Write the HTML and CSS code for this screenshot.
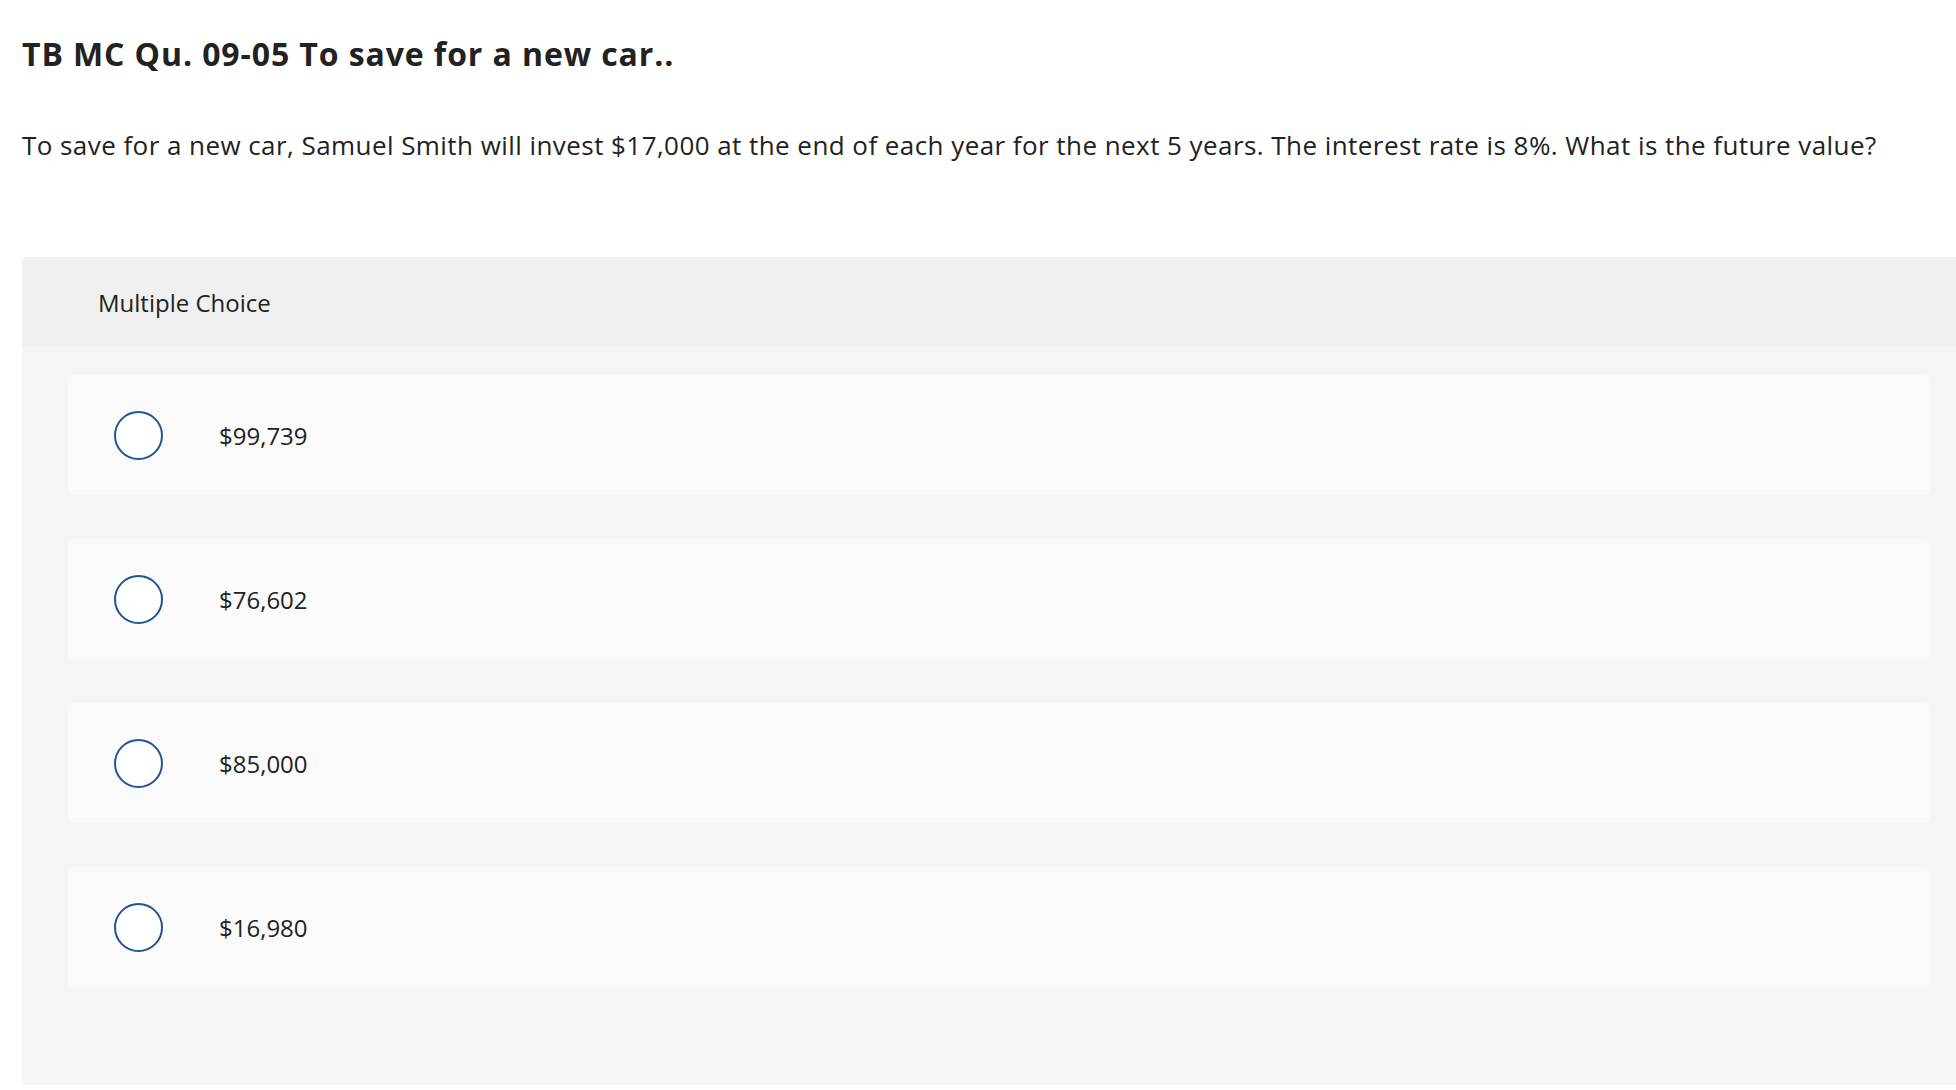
FILE: index.html
```html
<!DOCTYPE html>
<html lang="en">
<head>
<meta charset="utf-8">
<title>TB MC Qu. 09-05</title>
<link rel="stylesheet" href="styles.css">
</head>
<body>
<main class="page">
  <h1 class="title">TB MC Qu. 09-05 To save for a new car..</h1>
  <p class="question">To save for a new car, Samuel Smith will invest $17,000 at the end of each year for the next 5 years. The interest rate is 8%. What is the future value?</p>
  <section class="panel">
    <div class="panel-head">Multiple Choice</div>
    <div class="panel-body">
      <label class="option"><span class="radio"></span><span class="answer">$99,739</span></label>
      <label class="option"><span class="radio"></span><span class="answer">$76,602</span></label>
      <label class="option"><span class="radio"></span><span class="answer">$85,000</span></label>
      <label class="option"><span class="radio"></span><span class="answer">$16,980</span></label>
    </div>
  </section>
</main>
</body>
</html>
```

FILE: styles.css
```css
html, body {
  margin: 0;
  padding: 0;
  background: #ffffff;
}

body {
  font-family: "Open Sans", "Liberation Sans", sans-serif;
  color: #222222;
  overflow: hidden;
}

.page {
  padding: 34px 0 0 22px;
}

.title {
  margin: 0;
  font-size: 32px;
  line-height: 40px;
  font-weight: 700;
  letter-spacing: 0.9px;
  color: #222222;
}

.question {
  margin: 54px 0 0 0;
  font-size: 26px;
  line-height: 34px;
  letter-spacing: 0.44px;
  color: #222222;
}

.panel {
  margin-top: 95px;
  border-radius: 5px 0 0 5px;
  background: #f5f5f5;
  overflow: hidden;
}

.panel-head {
  height: 90px;
  display: flex;
  align-items: center;
  padding-left: 76px;
  background: #f0f0f0;
  font-size: 24px;
}

.panel-body {
  display: flex;
  flex-direction: column;
  gap: 44px;
  padding: 28px 26px 98px 46px;
}

.option {
  height: 120px;
  display: flex;
  align-items: center;
  gap: 56px;
  padding-left: 46px;
  background: #fafafa;
  border-radius: 6px;
}

.radio {
  width: 49px;
  height: 49px;
  box-sizing: border-box;
  border: 2px solid #1f5591;
  border-radius: 50%;
  background: #ffffff;
  flex: none;
}

.answer {
  font-size: 24px;
}
```
